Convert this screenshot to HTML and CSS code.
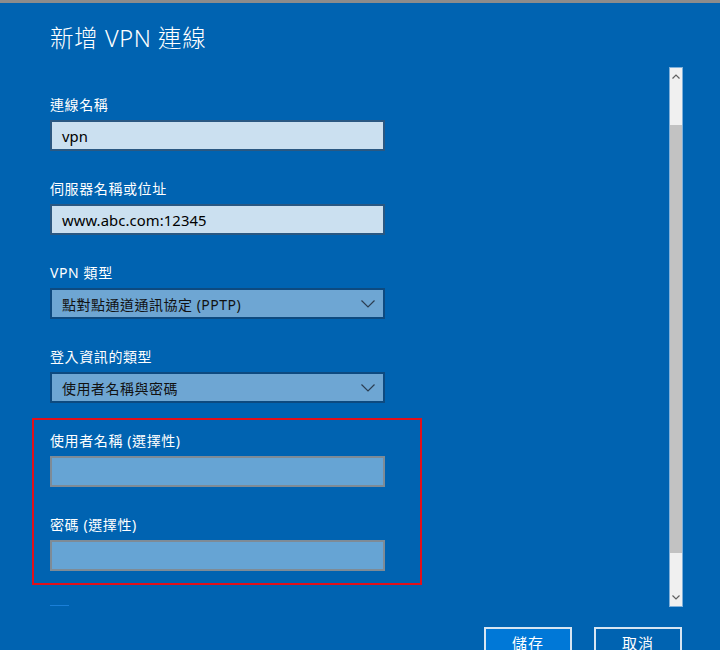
FILE: index.html
```html
<!DOCTYPE html>
<html lang="zh-Hant">
<head>
<meta charset="utf-8">
<title>新增 VPN 連線</title>
<link rel="stylesheet" href="styles.css">
</head>
<body>
<div class="topbar"></div>
<header class="header">
  <h1 class="title">新增 VPN 連線</h1>
</header>
<div class="row">
  <div class="form">
    <div class="field">
      <div class="label">連線名稱</div>
      <div class="box text">vpn</div>
    </div>
    <div class="field">
      <div class="label">伺服器名稱或位址</div>
      <div class="box text">www.abc.com:12345</div>
    </div>
    <div class="field">
      <div class="label">VPN 類型</div>
      <div class="box select"><span>點對點通道通訊協定 (PPTP)</span>
        <svg class="chev" width="14" height="8" viewBox="0 0 14 8"><path d="M0.5 0.5 L7 7 L13.5 0.5" fill="none" stroke="#2c3e52" stroke-width="1.2"/></svg>
      </div>
    </div>
    <div class="field">
      <div class="label">登入資訊的類型</div>
      <div class="box select"><span>使用者名稱與密碼</span>
        <svg class="chev" width="14" height="8" viewBox="0 0 14 8"><path d="M0.5 0.5 L7 7 L13.5 0.5" fill="none" stroke="#2c3e52" stroke-width="1.2"/></svg>
      </div>
    </div>
    <div class="highlight">
      <div class="field">
        <div class="label">使用者名稱 (選擇性)</div>
        <div class="box empty"></div>
      </div>
      <div class="field last">
        <div class="label">密碼 (選擇性)</div>
        <div class="box empty"></div>
      </div>
    </div>
    <div class="focusline"></div>
  </div>
  <div class="scrollbar">
    <div class="arrow up"><svg width="8" height="5" viewBox="0 0 8 5"><path d="M0.5 4.5 L4 1 L7.5 4.5" fill="none" stroke="#606060" stroke-width="1.2"/></svg></div>
    <div class="track"><div class="thumb"></div></div>
    <div class="arrow down"><svg width="8" height="5" viewBox="0 0 8 5"><path d="M0.5 0.5 L4 4 L7.5 0.5" fill="none" stroke="#606060" stroke-width="1.2"/></svg></div>
  </div>
</div>
<div class="buttons">
  <button class="btn primary">儲存</button>
  <button class="btn">取消</button>
</div>
</body>
</html>
```

FILE: styles.css
```css
html, body {
  margin: 0;
  padding: 0;
}
body {
  width: 720px;
  height: 650px;
  overflow: hidden;
  background: #0063b1;
  color: #ffffff;
  font-family: "Noto Sans", "Noto Sans CJK TC", sans-serif;
}
.topbar {
  height: 3px;
  background: #8c8c8c;
}
.header {
  height: 65px;
  padding-left: 50px;
  box-sizing: border-box;
}
.title {
  margin: 0;
  padding-top: 19px;
  font-size: 23.5px;
  line-height: 32px;
  font-weight: 300;
  letter-spacing: 0.6px;
}
.row {
  display: flex;
  height: 538px;
}
.form {
  flex: 1;
  padding-left: 50px;
  padding-top: 27px;
  overflow: hidden;
}
.field {
  margin-bottom: 28px;
}
.field.last {
  margin-bottom: 0;
}
.label {
  font-size: 14px;
  line-height: 20px;
  height: 20px;
  margin-bottom: 5px;
  letter-spacing: 0.6px;
}
.box {
  width: 335px;
  height: 31px;
  box-sizing: border-box;
  border: 2px solid #2a5882;
  display: flex;
  align-items: center;
  padding: 0 10px;
  font-size: 14px;
  color: #000000;
}
.box.text {
  background: #cbe0f0;
  font-size: 14.8px;
  letter-spacing: 0.1px;
}
.box.select {
  background: #6ea6d3;
  border-color: #0d4a80;
  justify-content: space-between;
  color: #111111;
  letter-spacing: 0.5px;
  padding-right: 8px;
}
.box.empty {
  background: #66a4d4;
  border-color: #7e8b96;
}
.chev {
  display: block;
}
.highlight {
  width: 390px;
  box-sizing: border-box;
  margin-left: -18px;
  margin-top: -13px;
  border: 2px solid #e3101a;
  padding: 11px 0 12px 16px;
}
.focusline {
  width: 19px;
  height: 2px;
  margin-top: 20px;
  background: #1a7fd8;
}
.scrollbar {
  width: 12px;
  margin-right: 38px;
  background: #f0f0f0;
  display: flex;
  flex-direction: column;
  box-shadow: 0 0 0 1px #7fb0da;
}
.arrow {
  height: 17px;
  display: flex;
  align-items: center;
  justify-content: center;
}
.track {
  flex: 1;
  display: flex;
  flex-direction: column;
}
.thumb {
  margin-top: 40px;
  height: 428px;
  background: #c2c2c2;
}
.buttons {
  display: flex;
  justify-content: flex-end;
  gap: 22px;
  padding-right: 38px;
  margin-top: 21px;
}
.btn {
  width: 88px;
  height: 32px;
  box-sizing: border-box;
  border: 2px solid #d6e5f2;
  background: transparent;
  color: #ffffff;
  font-family: "Noto Sans", "Noto Sans CJK TC", sans-serif;
  font-size: 15px;
  line-height: 26px;
  padding: 0;
  letter-spacing: 1px;
}
.btn.primary {
  background: #0078d7;
}
```
